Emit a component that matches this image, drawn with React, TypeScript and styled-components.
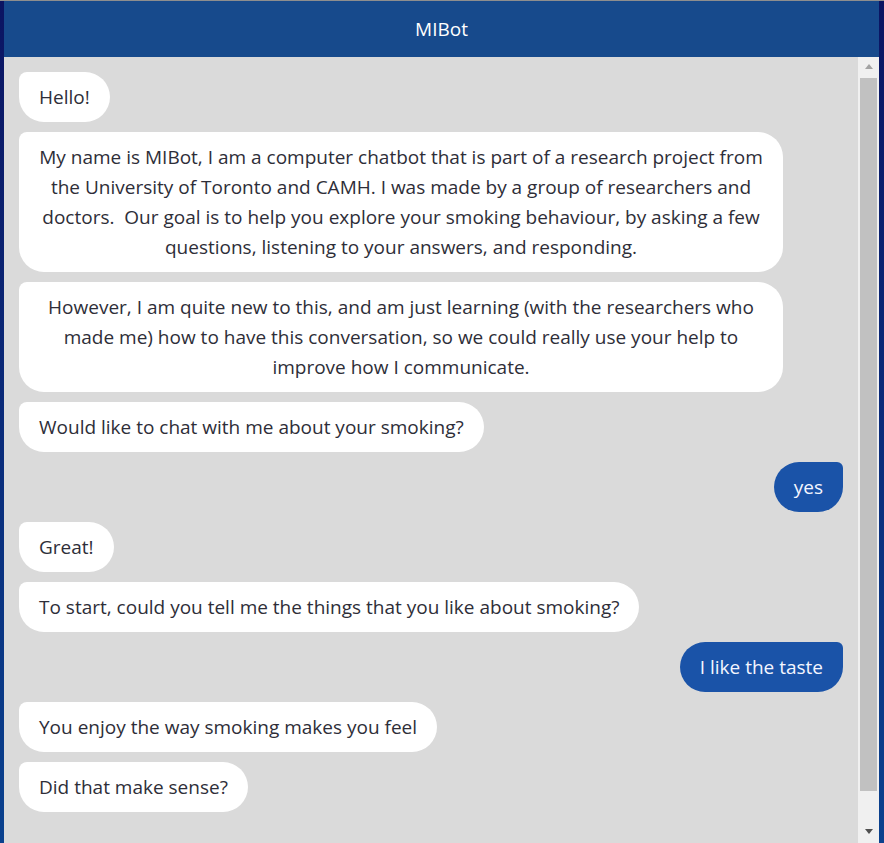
import React from "react";
import styled, { createGlobalStyle } from "styled-components";

const GlobalStyle = createGlobalStyle`
  html, body {
    margin: 0;
    padding: 0;
    height: 100%;
  }
  body {
    font-family: "Open Sans", "Noto Sans", sans-serif;
    overflow: hidden;
  }
  #root {
    height: 100%;
  }
`;

const Page = styled.div`
  height: 843px;
  box-sizing: border-box;
  border-top: 1px solid #8e8e8e;
  padding: 0 5px 0 4px;
  background: linear-gradient(to bottom, #0b1462 0%, #0a2b7a 50%, #0a418e 100%);
  display: flex;
  flex-direction: column;
`;

const Header = styled.header`
  height: 56px;
  flex: 0 0 56px;
  background: #174a8c;
  color: #ffffff;
  display: flex;
  align-items: center;
  justify-content: center;
  font-size: 19px;
  padding-bottom: 1px;
  box-sizing: border-box;
`;

const Body = styled.div`
  flex: 1;
  display: flex;
  min-height: 0;
  background: #dadada;
`;

const MessageList = styled.div`
  flex: 1;
  overflow: hidden;
  padding: 15px;
  display: flex;
  flex-direction: column;
  gap: 10px;
`;

const Bubble = styled.div<{ $user?: boolean; $wide?: boolean }>`
  align-self: ${(p) => (p.$user ? "flex-end" : "flex-start")};
  max-width: calc(100% - 60px);
  width: ${(p) => (p.$wide ? "calc(100% - 60px)" : "auto")};
  box-sizing: border-box;
  padding: 10px 20px;
  font-size: 19px;
  line-height: 30px;
  white-space: nowrap;
  text-align: center;
  background: ${(p) => (p.$user ? "#1a53a8" : "#ffffff")};
  color: ${(p) => (p.$user ? "#f4f6ff" : "#2e2e38")};
  border-radius: ${(p) => (p.$user ? "25px 6px 25px 25px" : "8px 25px 25px 25px")};
`;

const ScrollBar = styled.div`
  width: 21px;
  flex: 0 0 21px;
  background: #f0f0f0;
  display: flex;
  flex-direction: column;
  align-items: center;
`;

const ArrowButton = styled.div<{ $down?: boolean }>`
  height: ${(p) => (p.$down ? "24px" : "21px")};
  width: 100%;
  display: flex;
  align-items: center;
  justify-content: center;
  margin-top: ${(p) => (p.$down ? "auto" : "0")};
  padding-bottom: ${(p) => (p.$down ? "0" : "2px")};
  box-sizing: border-box;
`;

const Arrow = styled.div<{ $down?: boolean }>`
  width: 0;
  height: 0;
  border-left: 4.5px solid transparent;
  border-right: 4.5px solid transparent;
  ${(p) =>
    p.$down
      ? "border-top: 5px solid #505050;"
      : "border-bottom: 5px solid #a3a3a3;"}
`;

const Thumb = styled.div`
  width: 17px;
  height: 713px;
  background: #c1c1c1;
`;

type Msg = { user?: boolean; lines: React.ReactNode[] };

const messages: Msg[] = [
  { lines: ["Hello!"] },
  {
    lines: [
      "My name is MIBot, I am a computer chatbot that is part of a research project from",
      "the University of Toronto and CAMH. I was made by a group of researchers and",
      "doctors.\u00a0 Our goal is to help you explore your smoking behaviour, by asking a few",
      "questions, listening to your answers, and responding.",
    ],
  },
  {
    lines: [
      "However, I am quite new to this, and am just learning (with the researchers who",
      "made me) how to have this conversation, so we could really use your help to",
      "improve how I communicate.",
    ],
  },
  { lines: ["Would like to chat with me about your smoking?"] },
  { user: true, lines: ["yes"] },
  { lines: ["Great!"] },
  { lines: ["To start, could you tell me the things that you like about smoking?"] },
  { user: true, lines: ["I like the taste"] },
  { lines: ["You enjoy the way smoking makes you feel"] },
  { lines: ["Did that make sense?"] },
];

export default function App() {
  return (
    <>
      <GlobalStyle />
      <Page>
        <Header>MIBot</Header>
        <Body>
          <MessageList>
            {messages.map((m, i) => (
              <Bubble key={i} $user={m.user} $wide={m.lines.length > 1}>
                {m.lines.map((l, j) => (
                  <React.Fragment key={j}>
                    {j > 0 && <br />}
                    {l}
                  </React.Fragment>
                ))}
              </Bubble>
            ))}
          </MessageList>
          <ScrollBar>
            <ArrowButton>
              <Arrow />
            </ArrowButton>
            <Thumb />
            <ArrowButton $down>
              <Arrow $down />
            </ArrowButton>
          </ScrollBar>
        </Body>
      </Page>
    </>
  );
}
